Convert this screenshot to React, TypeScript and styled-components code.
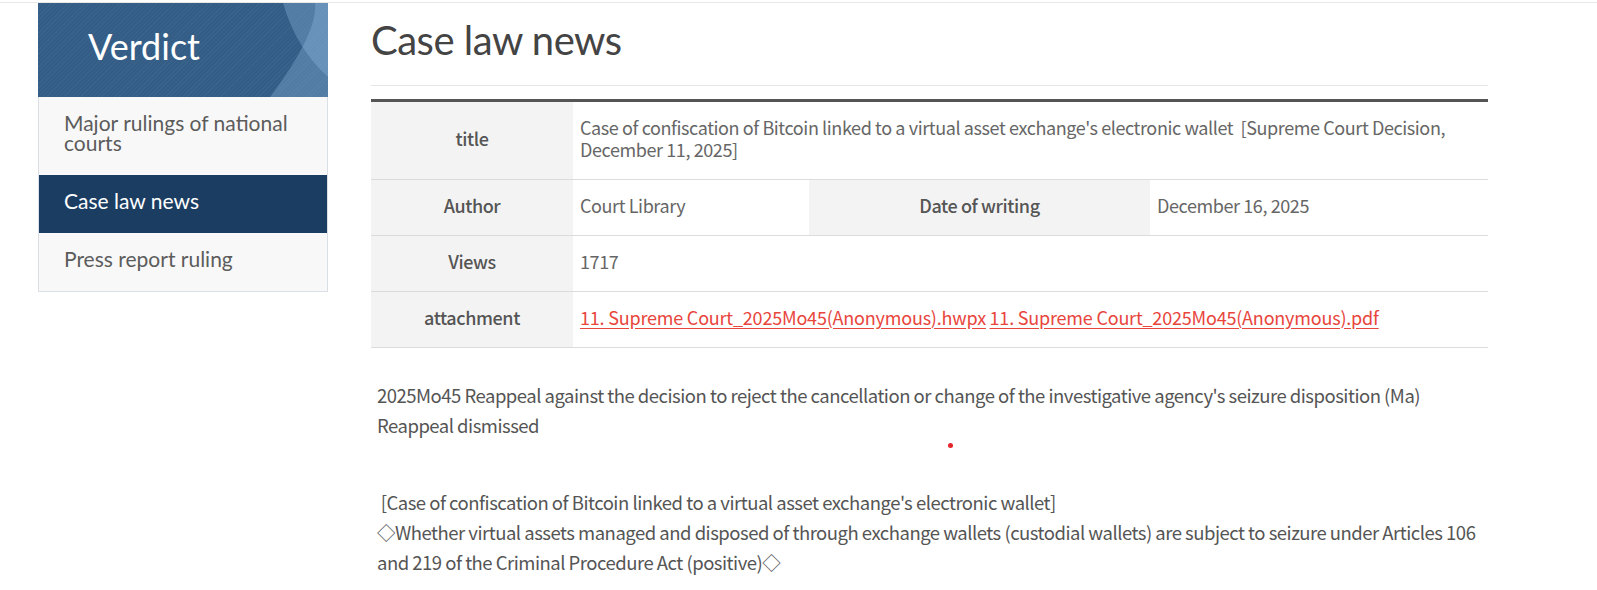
import styled, { createGlobalStyle } from 'styled-components';

const GlobalStyle = createGlobalStyle`
  * { box-sizing: border-box; }
  body {
    margin: 0;
    background: #ffffff;
    font-family: 'Noto Sans CJK KR', 'Noto Sans', sans-serif;
  }
`;

const Page = styled.div`
  margin-top: 2px;
  border-top: 1px solid #e8e8e8;
  display: flex;
  align-items: flex-start;
  gap: 43px;
  padding-left: 38px;
`;

const Sidebar = styled.aside`
  width: 290px;
  flex-shrink: 0;
`;

const SideHeader = styled.div`
  position: relative;
  height: 94px;
  padding: 21.5px 0 0 50px;
  background-color: #335d86;
  background-image: repeating-linear-gradient(
    135deg,
    rgba(255, 255, 255, 0.035) 0 1px,
    transparent 1px 3px
  );
  overflow: hidden;
`;

const HeaderArt = styled.svg`
  position: absolute;
  top: 0;
  right: 0;
  width: 290px;
  height: 94px;
`;

const SideTitle = styled.h1`
  position: relative;
  margin: 0;
  font-family: Lato, 'Noto Sans', sans-serif;
  font-weight: 400;
  font-size: 36px;
  line-height: 1.2;
  color: #ffffff;
`;

const Menu = styled.ul`
  list-style: none;
  margin: 0;
  padding: 0;
  background: #f8f8f8;
  border: 1px solid #dadfe5;
  border-top: none;
`;

const MenuItem = styled.li<{ $active?: boolean }>`
  padding: 16px 25px 22px;
  font-family: Lato, 'Noto Sans', sans-serif;
  font-size: 21px;
  line-height: 20px;
  color: ${(p) => (p.$active ? '#ffffff' : '#5c5c5c')};
  background: ${(p) => (p.$active ? '#1b3d62' : 'transparent')};
`;

const Content = styled.main`
  width: 1117px;
  flex-shrink: 0;
`;

const Title = styled.h2`
  margin: 12.5px 0 0;
  padding-bottom: 21.5px;
  border-bottom: 1px solid #e5e5e5;
  font-family: Lato, 'Noto Sans', sans-serif;
  font-weight: 400;
  font-size: 40px;
  line-height: 48px;
  letter-spacing: -0.5px;
  color: #444444;
`;

const InfoTable = styled.table`
  width: 100%;
  margin-top: 13px;
  border-collapse: collapse;
  table-layout: fixed;
  border-top: 3px solid #555555;
`;

const Row = styled.tr`
  border-bottom: 1px solid #dcdcdc;
`;

const HeadCell = styled.th`
  padding: 14px 7px 19px;
  background: #f3f3f3;
  font-size: 18px;
  line-height: 22px;
  font-weight: 500;
  color: #555555;
  text-align: center;
  letter-spacing: -0.4px;
`;

const ValueCell = styled.td`
  padding: 14px 7px 19px;
  font-size: 18px;
  line-height: 22px;
  font-weight: 400;
  color: #666666;
  text-align: left;
  letter-spacing: -0.4px;
`;

const FileLink = styled.a`
  color: #e8453c;
  text-decoration: underline;
  text-underline-offset: 3px;
  letter-spacing: -0.2px;
`;

const Body = styled.div`
  margin-top: 32px;
  padding: 0 8px 0 6px;
  font-size: 18.5px;
  line-height: 30px;
  color: #555555;
  letter-spacing: -0.5px;
`;

const Paragraph = styled.p`
  margin: 0;
`;

const DotRow = styled.div`
  height: 47px;
  padding: 3px 0 0 571px;
`;

const Dot = styled.span`
  display: block;
  width: 5px;
  height: 5px;
  border-radius: 50%;
  background: #e3262b;
`;

const menu = [
  { label: 'Major rulings of national courts' },
  { label: 'Case law news', active: true },
  { label: 'Press report ruling' },
];

export default function App() {
  return (
    <>
      <GlobalStyle />
      <Page>
        <Sidebar>
          <SideHeader>
            <HeaderArt viewBox="0 0 290 94" preserveAspectRatio="none">
              <path d="M245,0 Q258,45 290,74 L290,0 Z" fill="#9cc2ea" fillOpacity="0.3" />
              <path d="M277,0 Q280,30 232,94 L290,94 L290,0 Z" fill="#9cc2ea" fillOpacity="0.3" />
            </HeaderArt>
            <SideTitle>Verdict</SideTitle>
          </SideHeader>
          <Menu>
            {menu.map((m) => (
              <MenuItem key={m.label} $active={m.active}>
                {m.label}
              </MenuItem>
            ))}
          </Menu>
        </Sidebar>

        <Content>
          <Title>Case law news</Title>
          <InfoTable>
            <colgroup>
              <col style={{ width: 202 }} />
              <col style={{ width: 236 }} />
              <col style={{ width: 341 }} />
              <col />
            </colgroup>
            <tbody>
              <Row>
                <HeadCell>title</HeadCell>
                <ValueCell colSpan={3}>
                  Case of confiscation of Bitcoin linked to a virtual asset exchange's electronic wallet{'\u00a0'} [Supreme Court Decision, December 11, 2025]
                </ValueCell>
              </Row>
              <Row>
                <HeadCell>Author</HeadCell>
                <ValueCell>Court Library</ValueCell>
                <HeadCell>Date of writing</HeadCell>
                <ValueCell>December 16, 2025</ValueCell>
              </Row>
              <Row>
                <HeadCell>Views</HeadCell>
                <ValueCell colSpan={3}>1717</ValueCell>
              </Row>
              <Row>
                <HeadCell>attachment</HeadCell>
                <ValueCell colSpan={3}>
                  <FileLink href="#">11. Supreme Court_2025Mo45(Anonymous).hwpx</FileLink>{' '}
                  <FileLink href="#">11. Supreme Court_2025Mo45(Anonymous).pdf</FileLink>
                </ValueCell>
              </Row>
            </tbody>
          </InfoTable>

          <Body>
            <Paragraph>
              2025Mo45 Reappeal against the decision to reject the cancellation or change of the investigative agency's seizure disposition (Ma)
              <br />
              Reappeal dismissed
            </Paragraph>
            <DotRow>
              <Dot />
            </DotRow>
            <Paragraph>
              {'\u00a0'}[Case of confiscation of Bitcoin linked to a virtual asset exchange's electronic wallet]
              <br />
              ◇Whether virtual assets managed and disposed of through exchange wallets (custodial wallets) are subject to seizure under Articles 106 and 219 of the Criminal Procedure Act (positive)◇
            </Paragraph>
          </Body>
        </Content>
      </Page>
    </>
  );
}
